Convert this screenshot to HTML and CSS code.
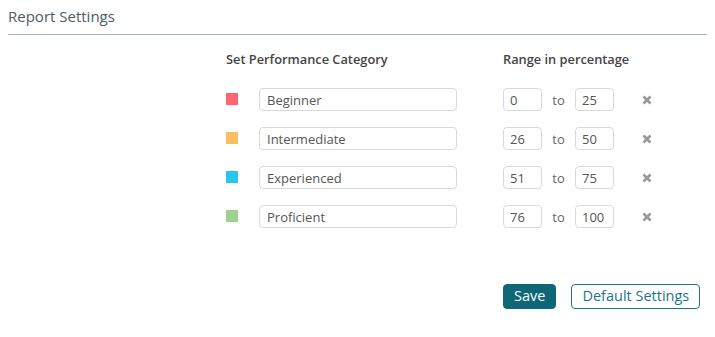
FILE: index.html
```html
<!DOCTYPE html>
<html lang="en">
<head>
    <meta charset="UTF-8">
    <meta name="viewport" content="width=device-width, initial-scale=1.0">
    <title>Report Settings</title>
    <link rel="stylesheet" href="styles.css">
</head>
<body>
    <h2 class="page-title">Report Settings</h2>

    <div class="settings">
        <div class="row head">
            <div class="col-category">Set Performance Category</div>
            <div class="col-range">Range in percentage</div>
        </div>

        <div class="row">
            <div class="col-category">
                <span class="swatch red"></span>
                <input type="text" class="name" value="Beginner">
            </div>
            <div class="col-range">
                <input type="text" class="num" value="0">
                <span class="to">to</span>
                <input type="text" class="num" value="25">
                <svg class="remove" viewBox="0 0 10 10"><path d="M1.5 1.5 L8.5 8.5 M8.5 1.5 L1.5 8.5"/></svg>
            </div>
        </div>

        <div class="row">
            <div class="col-category">
                <span class="swatch orange"></span>
                <input type="text" class="name" value="Intermediate">
            </div>
            <div class="col-range">
                <input type="text" class="num" value="26">
                <span class="to">to</span>
                <input type="text" class="num" value="50">
                <svg class="remove" viewBox="0 0 10 10"><path d="M1.5 1.5 L8.5 8.5 M8.5 1.5 L1.5 8.5"/></svg>
            </div>
        </div>

        <div class="row">
            <div class="col-category">
                <span class="swatch blue"></span>
                <input type="text" class="name" value="Experienced">
            </div>
            <div class="col-range">
                <input type="text" class="num" value="51">
                <span class="to">to</span>
                <input type="text" class="num" value="75">
                <svg class="remove" viewBox="0 0 10 10"><path d="M1.5 1.5 L8.5 8.5 M8.5 1.5 L1.5 8.5"/></svg>
            </div>
        </div>

        <div class="row">
            <div class="col-category">
                <span class="swatch green"></span>
                <input type="text" class="name" value="Proficient">
            </div>
            <div class="col-range">
                <input type="text" class="num" value="76">
                <span class="to">to</span>
                <input type="text" class="num" value="100">
                <svg class="remove" viewBox="0 0 10 10"><path d="M1.5 1.5 L8.5 8.5 M8.5 1.5 L1.5 8.5"/></svg>
            </div>
        </div>

        <div class="actions">
            <button class="btn btn-primary">Save</button>
            <button class="btn btn-outline">Default Settings</button>
        </div>
    </div>
</body>
</html>
```

FILE: styles.css
```css
body {
    font-family: "Open Sans", Arial, sans-serif;
    color: #555;
    margin: 8px;
    background-color: white;
}

.page-title {
    font-size: 15px;
    font-weight: normal;
    color: #4d5b63;
    margin: 0;
    padding: 0 0 10px 0;
    line-height: 16px;
    border-bottom: 1px solid #a3b5c4;
}

.settings {
    padding-left: 218px;
    padding-top: 14px;
}

.row {
    display: flex;
    align-items: center;
    height: 39px;
}

.row.head {
    height: 20px;
    margin-bottom: 11px;
    font-size: 12.8px;
    font-weight: 600;
    color: #444;
}

.col-category {
    display: flex;
    align-items: center;
    width: 277px;
}

.col-range {
    display: flex;
    align-items: center;
}

.swatch {
    display: inline-block;
    width: 12px;
    height: 12px;
    margin-right: 21px;
    margin-top: -1px;
}

.swatch.red { background-color: #fc6774; }
.swatch.orange { background-color: #fdbd61; }
.swatch.blue { background-color: #27c6ee; }
.swatch.green { background-color: #9fd18f; }

input {
    font-family: "Open Sans", Arial, sans-serif;
    font-size: 13px;
    color: #555;
    border: 1px solid #d9d9d9;
    border-radius: 4px;
    height: 23px;
    padding: 0 7px;
    box-sizing: border-box;
    margin: 0;
}

input.name {
    width: 198px;
}

input.num {
    width: 39px;
    padding: 0 6px;
}

.to {
    font-size: 13px;
    color: #666;
    width: 33px;
    text-align: center;
}

.remove {
    width: 10px;
    height: 10px;
    margin-left: 28px;
    stroke: #999;
    stroke-width: 2.6;
    fill: none;
}

.actions {
    display: flex;
    gap: 15px;
    padding-left: 277px;
    margin-top: 48px;
}

.btn {
    font-family: "Open Sans", Arial, sans-serif;
    font-size: 14.5px;
    height: 25px;
    padding: 0 10px;
    border-radius: 4px;
    cursor: pointer;
    line-height: 1;
}

.btn-primary {
    background-color: #0e6677;
    border: 1px solid #0e6677;
    color: white;
}

.btn-outline {
    background-color: white;
    border: 1px solid #1d7688;
    color: #1d7688;
}
```
